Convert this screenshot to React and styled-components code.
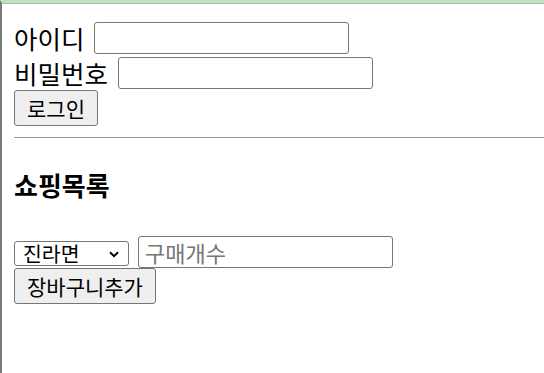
import styled, { createGlobalStyle } from "styled-components";
import * as SelectPrimitive from "@radix-ui/react-select";

const GlobalStyle = createGlobalStyle`
  html, body {
    margin: 0;
    background: #fff;
  }
  body {
    font-family: "Noto Sans CJK KR", "Noto Sans", sans-serif;
    color: #000;
  }
`;

const Frame = styled.div`
  min-height: 373px;
  box-sizing: border-box;
  border-top: 3px solid #c4e0c4;
  box-shadow: inset 0 1px 0 #9fbf9f;
  border-left: 2px solid #7a7a7a;
  padding: 17px 0 0 12px;
  overflow: hidden;
`;

const Row = styled.div`
  display: flex;
  align-items: center;
  gap: ${(p) => p.gap || 10}px;
  height: ${(p) => p.h || 35}px;
`;

const Label = styled.span`
  font-size: 25.5px;
  line-height: 1;
`;

const TextInput = styled.input`
  box-sizing: border-box;
  width: 255px;
  height: 32px;
  border: 1px solid #767676;
  border-radius: 3px;
  padding: 0 6px;
  font-family: inherit;
  font-size: 22px;
  &::placeholder {
    color: #767676;
  }
`;

const Button = styled.button`
  box-sizing: border-box;
  height: 36px;
  padding: 0 12px;
  border: 1px solid #767676;
  border-radius: 3px;
  background: #efefef;
  font-family: inherit;
  font-size: 21px;
  color: #000;
`;

const Rule = styled.hr`
  border: none;
  border-top: 1px solid #9a9a9a;
  margin: 11px 0 0;
`;

const Heading = styled.h3`
  margin: 33px 0 37px;
  font-size: 26px;
  font-weight: 700;
  line-height: 28px;
`;

const Trigger = styled(SelectPrimitive.Trigger)`
  box-sizing: border-box;
  display: flex;
  align-items: center;
  justify-content: space-between;
  width: 115px;
  height: 25px;
  margin-top: 2px;
  border: 1px solid #767676;
  border-radius: 3px;
  padding: 0 9px 0 8px;
  background: #fff;
  color: #000;
  font-family: inherit;
  font-size: 20.5px;
  line-height: 23px;
  cursor: default;
`;

const Chevron = styled.svg`
  width: 10px;
  height: 7px;
  margin-top: 2px;
`;

const Menu = styled(SelectPrimitive.Content)`
  background: #fff;
  border: 1px solid #767676;
  font-family: "Noto Sans CJK KR", sans-serif;
  font-size: 20px;
`;

const MenuItem = styled(SelectPrimitive.Item)`
  padding: 0 8px;
  outline: none;
  &[data-highlighted] {
    background: #1e90ff;
    color: #fff;
  }
`;

const ramen = ["진라면", "신라면", "너구리"];

function RamenSelect() {
  return (
    <SelectPrimitive.Root defaultValue={ramen[0]}>
      <Trigger aria-label="상품">
        <SelectPrimitive.Value />
        <SelectPrimitive.Icon asChild>
          <Chevron viewBox="0 0 10 7">
            <path d="M1 1.2 L5 5.2 L9 1.2" fill="none" stroke="#000" strokeWidth="2" />
          </Chevron>
        </SelectPrimitive.Icon>
      </Trigger>
      <SelectPrimitive.Portal>
        <Menu position="popper">
          <SelectPrimitive.Viewport>
            {ramen.map((r) => (
              <MenuItem key={r} value={r}>
                <SelectPrimitive.ItemText>{r}</SelectPrimitive.ItemText>
              </MenuItem>
            ))}
          </SelectPrimitive.Viewport>
        </Menu>
      </SelectPrimitive.Portal>
    </SelectPrimitive.Root>
  );
}

export default function App() {
  return (
    <>
      <GlobalStyle />
      <Frame>
        <Row>
          <Label>아이디</Label>
          <TextInput type="text" />
        </Row>
        <Row>
          <Label>비밀번호</Label>
          <TextInput type="password" />
        </Row>
        <Row h={36}>
          <Button>로그인</Button>
        </Row>
        <Rule />
        <Heading>쇼핑목록</Heading>
        <Row h={32} gap={9}>
          <RamenSelect />
          <TextInput type="number" placeholder="구매개수" />
        </Row>
        <Row h={36}>
          <Button>장바구니추가</Button>
        </Row>
      </Frame>
    </>
  );
}
